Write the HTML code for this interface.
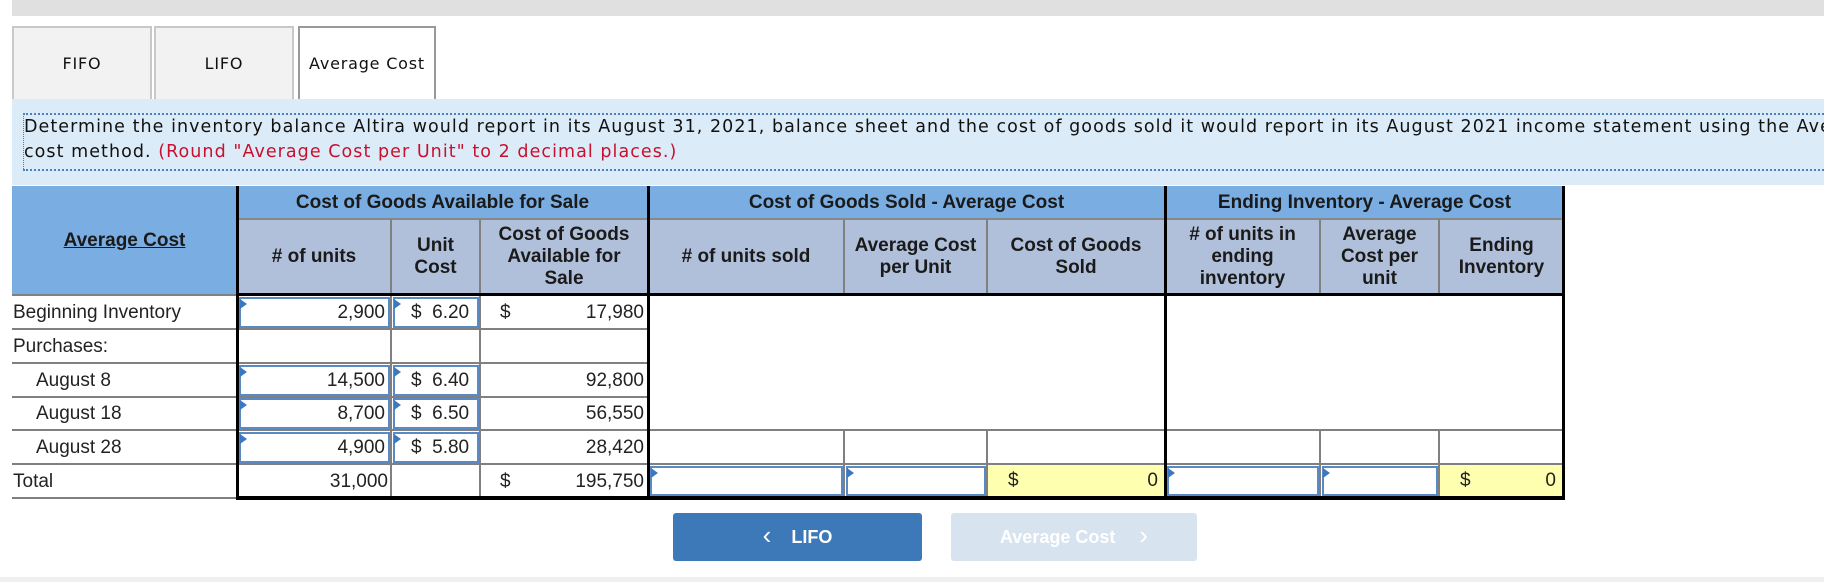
<!DOCTYPE html>
<html><head><meta charset="utf-8"><style>
*{margin:0;padding:0;box-sizing:border-box}
body{width:1824px;height:582px;background:#fff;position:relative;overflow:hidden;font-family:"Liberation Sans",Arial,sans-serif;color:#222}
.a{position:absolute}
.tab{position:absolute;top:26px;height:73px;background:#f2f2f2;border:2px solid #c8c8c8;border-bottom:none;font-family:"DejaVu Sans",sans-serif;font-size:16px;letter-spacing:0.8px;display:flex;align-items:center;justify-content:center;color:#111}
.h1{position:absolute;background:#7aaee3;font-weight:bold;font-size:19px;display:flex;align-items:center;justify-content:center;text-align:center;color:#1a1a1a}
.h2{position:absolute;background:#b0c0da;font-weight:bold;font-size:19px;display:flex;align-items:center;justify-content:center;text-align:center;line-height:22px;color:#1a1a1a}
.hl{position:absolute;height:2px;background:#808080}
.vl{position:absolute;width:2px;background:#808080}
.bv{position:absolute;width:3px;background:#000}
.lab{position:absolute;font-size:19px;display:flex;align-items:center;color:#222}
.in{position:absolute;border:2px solid #5a8ac6;background:#fff;font-size:19px;display:flex;align-items:center;justify-content:flex-end;padding-right:3px}
.in::before{content:"";position:absolute;left:-1px;top:-1px;border-left:7px solid #3b78c4;border-top:5px solid transparent;border-bottom:5px solid transparent;transform:translateY(1px)}
.v{position:absolute;font-size:19px;display:flex;align-items:center;justify-content:flex-end}
.y{position:absolute;background:#ffffb0;font-size:19px;display:flex;align-items:center;justify-content:space-between;padding:0 6px 0 20px}
</style></head><body>
<div class="a" style="left:12px;top:0;width:1812px;height:16px;background:#e0e0e0"></div>
<div class="tab" style="left:12px;width:140px">FIFO</div>
<div class="tab" style="left:154px;width:140px">LIFO</div>
<div class="tab" style="left:298px;width:138px;background:#fff;border-color:#999">Average Cost</div>
<div class="a" style="left:12px;top:99px;width:1812px;height:86px;background:#dcebf8"></div>
<div class="a" style="left:23px;top:113px;width:1801px;height:58px;border-top:2px dotted #4a7fc0;border-bottom:2px dotted #4a7fc0;border-left:1px dotted #4a7fc0;font-family:'DejaVu Sans',sans-serif;font-size:17.5px;letter-spacing:1.05px;line-height:25px;padding-top:0px;white-space:nowrap;color:#111">Determine the inventory balance Altira would report in its August 31, 2021, balance sheet and the cost of goods sold it would report in its August 2021 income statement using the Average<br>cost method. <span style="color:#c8102e">(Round "Average Cost per Unit" to 2 decimal places.)</span></div>

<!-- headers -->
<div class="h1" style="left:12px;top:186px;width:225px;height:109px"><span style="text-decoration:underline">Average Cost</span></div>
<div class="h1" style="left:237px;top:186px;width:411px;height:33px">Cost of Goods Available for Sale</div>
<div class="h1" style="left:648px;top:186px;width:517px;height:33px">Cost of Goods Sold - Average Cost</div>
<div class="h1" style="left:1165px;top:186px;width:399px;height:33px">Ending Inventory - Average Cost</div>
<div class="h2" style="left:237px;top:219px;width:154px;height:76px"># of units</div>
<div class="h2" style="left:391px;top:219px;width:89px;height:76px">Unit<br>Cost</div>
<div class="h2" style="left:480px;top:219px;width:168px;height:76px">Cost of Goods<br>Available for<br>Sale</div>
<div class="h2" style="left:648px;top:219px;width:196px;height:76px"># of units sold</div>
<div class="h2" style="left:844px;top:219px;width:143px;height:76px">Average Cost<br>per Unit</div>
<div class="h2" style="left:987px;top:219px;width:178px;height:76px">Cost of Goods<br>Sold</div>
<div class="h2" style="left:1165px;top:219px;width:155px;height:76px"># of units in<br>ending<br>inventory</div>
<div class="h2" style="left:1320px;top:219px;width:119px;height:76px">Average<br>Cost per<br>unit</div>
<div class="h2" style="left:1439px;top:219px;width:125px;height:76px">Ending<br>Inventory</div>
<div class="hl" style="left:237px;top:218px;width:1327px;background:#888"></div>
<div class="vl" style="left:390px;top:219px;height:280px"></div>
<div class="vl" style="left:479px;top:219px;height:280px"></div>
<div class="vl" style="left:843px;top:219px;height:76px"></div>
<div class="vl" style="left:986px;top:219px;height:76px"></div>
<div class="vl" style="left:1319px;top:219px;height:76px"></div>
<div class="vl" style="left:1438px;top:219px;height:76px"></div>
<div class="vl" style="left:843px;top:430px;height:69px"></div>
<div class="vl" style="left:986px;top:430px;height:69px"></div>
<div class="vl" style="left:1319px;top:430px;height:69px"></div>
<div class="vl" style="left:1438px;top:430px;height:69px"></div>
<div class="hl" style="left:12px;top:294px;width:225px"></div>
<div class="a" style="left:237px;top:293px;width:1327px;height:3px;background:#000"></div>

<!-- row lines -->
<div class="hl" style="left:12px;top:328px;width:636px"></div>
<div class="hl" style="left:12px;top:362px;width:636px"></div>
<div class="hl" style="left:12px;top:396px;width:636px"></div>
<div class="hl" style="left:12px;top:429px;width:1552px"></div>
<div class="hl" style="left:12px;top:463px;width:1552px"></div>
<div class="hl" style="left:12px;top:497px;width:225px"></div>
<div class="a" style="left:237px;top:496px;width:1328px;height:4px;background:#000"></div>
<div class="bv" style="left:236px;top:186px;height:314px"></div>
<div class="bv" style="left:647px;top:186px;height:314px"></div>
<div class="bv" style="left:1164px;top:186px;height:314px"></div>
<div class="bv" style="left:1562px;top:186px;height:314px"></div>

<!-- labels -->
<div class="lab" style="left:13px;top:296px;height:33px">Beginning Inventory</div>
<div class="lab" style="left:13px;top:330px;height:33px">Purchases:</div>
<div class="lab" style="left:36px;top:364px;height:33px">August 8</div>
<div class="lab" style="left:36px;top:398px;height:32px">August 18</div>
<div class="lab" style="left:36px;top:431px;height:33px">August 28</div>
<div class="lab" style="left:13px;top:465px;height:33px">Total</div>

<!-- inputs -->
<div class="in" style="left:239px;top:297px;width:151px;height:31px">2,900</div>
<div class="in" style="left:393px;top:297px;width:86px;height:31px;justify-content:flex-start;padding-left:16px">$&nbsp;&nbsp;6.20</div>
<div class="in" style="left:239px;top:365px;width:151px;height:31px">14,500</div>
<div class="in" style="left:393px;top:365px;width:86px;height:31px;justify-content:flex-start;padding-left:16px">$&nbsp;&nbsp;6.40</div>
<div class="in" style="left:239px;top:398px;width:151px;height:31px">8,700</div>
<div class="in" style="left:393px;top:398px;width:86px;height:31px;justify-content:flex-start;padding-left:16px">$&nbsp;&nbsp;6.50</div>
<div class="in" style="left:239px;top:432px;width:151px;height:31px">4,900</div>
<div class="in" style="left:393px;top:432px;width:86px;height:31px;justify-content:flex-start;padding-left:16px">$&nbsp;&nbsp;5.80</div>
<div class="v" style="left:237px;top:465px;width:151px;height:33px">31,000</div>

<div class="lab" style="left:500px;top:296px;height:33px">$</div>
<div class="v" style="left:480px;top:296px;width:164px;height:33px">17,980</div>
<div class="v" style="left:480px;top:364px;width:164px;height:33px">92,800</div>
<div class="v" style="left:480px;top:398px;width:164px;height:32px">56,550</div>
<div class="v" style="left:480px;top:431px;width:164px;height:33px">28,420</div>
<div class="lab" style="left:500px;top:465px;height:33px">$</div>
<div class="v" style="left:480px;top:465px;width:164px;height:33px">195,750</div>

<div class="in" style="left:650px;top:466px;width:193px;height:30px"></div>
<div class="in" style="left:846px;top:466px;width:140px;height:30px"></div>
<div class="y" style="left:988px;top:465px;width:176px;height:31px"><span>$</span><span>0</span></div>
<div class="in" style="left:1167px;top:466px;width:152px;height:30px"></div>
<div class="in" style="left:1322px;top:466px;width:116px;height:30px"></div>
<div class="y" style="left:1440px;top:465px;width:122px;height:31px"><span>$</span><span>0</span></div>

<!-- buttons -->
<div class="a" style="left:673px;top:513px;width:249px;height:48px;background:#3d78b8;border-radius:3px;color:#fff;font-weight:bold;font-size:18px;display:flex;align-items:center;justify-content:center"><span style="font-size:26px;font-weight:normal;margin-right:20px;margin-top:-3px">&#8249;</span>LIFO</div>
<div class="a" style="left:951px;top:513px;width:246px;height:48px;background:#d8e3f0;border-radius:3px;color:#fff;font-weight:bold;font-size:18px;display:flex;align-items:center;justify-content:center">Average Cost<span style="font-size:26px;font-weight:normal;margin-left:24px;margin-top:-3px">&#8250;</span></div>
<div class="a" style="left:0;top:577px;width:1824px;height:5px;background:#f0f0f0"></div>
</body></html>
